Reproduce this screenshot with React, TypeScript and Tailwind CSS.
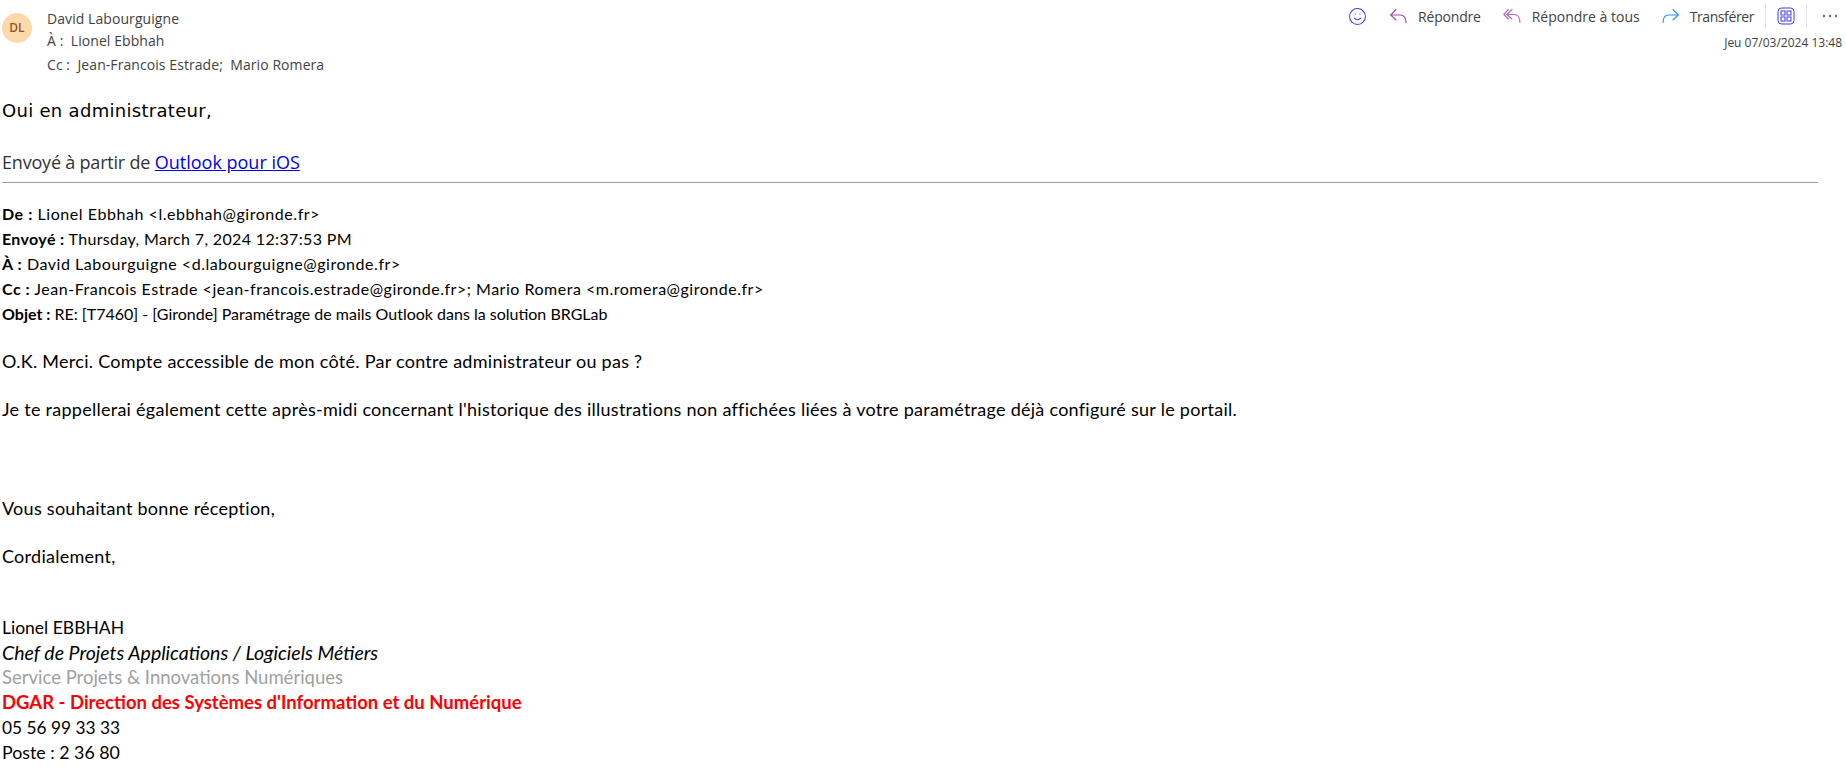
import { Smile } from 'lucide-react';

const segoe = 'font-["Open_Sans",sans-serif]';

const ReplyIcon = () => (
  <svg width="17" height="16" viewBox="0 0 17 16" fill="none" stroke="#a54ba5" strokeWidth="1.1" strokeLinecap="round" strokeLinejoin="round">
    <path d="M6 1.5 0.8 7 6 12" />
    <path d="M0.8 7H10.5C13.5 7 15.8 9.8 16 14.5" />
  </svg>
);

const ReplyAllIcon = () => (
  <svg width="18" height="16" viewBox="0 0 18 16" fill="none" stroke="#b565c0" strokeWidth="1.1" strokeLinecap="round" strokeLinejoin="round">
    <path d="M5.5 1.5 0.8 6.5 5.5 11" />
    <path d="M9 1.5 4 6.5 9 11" />
    <path d="M4 6.5H11C14.5 6.5 16.8 9.5 17 14.5" />
  </svg>
);

const ForwardIcon = () => (
  <svg width="17" height="16" viewBox="0 0 17 16" fill="none" stroke="#2b95e5" strokeWidth="1.1" strokeLinecap="round" strokeLinejoin="round">
    <path d="M11 1.5 16.2 7 11 12" />
    <path d="M16.2 7H6.5C3.5 7 1.2 9.8 1 14.5" />
  </svg>
);

const Action = ({ icon, label, tracking }: { icon: React.ReactNode; label: string; tracking: string }) => (
  <div className="flex items-center gap-[11px]">
    {icon}
    <span className={`text-[14px] text-[#424242] ${tracking}`}>{label}</span>
  </div>
);

const MetaLine = ({ label, value, tracking }: { label: string; value: string; tracking: string }) => (
  <div className={`h-[25px] leading-[25px] ${tracking}`}>
    <b className="font-bold">{label}</b> {value}
  </div>
);

export default function App() {
  return (
    <div className={`h-[767px] w-[1846px] overflow-hidden bg-white ${segoe}`}>
      <header className="flex h-[75px] justify-between">
        <div className="flex">
          <div className="ml-[2px] mt-[13px] flex h-[30px] w-[30px] items-center justify-center rounded-full bg-[#fed9a9] text-[12px] font-semibold text-[#8e562e]">
            DL
          </div>
          <div className="ml-[15px] pt-[8px] text-[14px] tracking-[0.07px] text-[#424242]">
            <div className="h-[21px] leading-[21px]">David Labourguigne</div>
            <div className="h-[23px] leading-[23px]">À :&nbsp; Lionel Ebbhah</div>
            <div className="h-[26px] leading-[26px]">Cc :&nbsp; Jean-Francois Estrade;&nbsp; Mario Romera</div>
          </div>
        </div>
        <div className="flex flex-col items-end pr-[4px]">
          <div className="flex h-[32px] items-center">
            <Smile size={19} strokeWidth={1.3} className="mr-[23px] text-[#3b3fe8]" />
            <div className="flex items-center gap-[22px]">
              <Action icon={<ReplyIcon />} label="Répondre" tracking="tracking-[-0.2px]" />
              <Action icon={<ReplyAllIcon />} label="Répondre à tous" tracking="tracking-normal" />
              <Action icon={<ForwardIcon />} label="Transférer" tracking="tracking-[-0.4px]" />
            </div>
            <div className="ml-[11px] h-[24px] w-px bg-[#e3e3e3]" />
            <svg className="mx-[11px]" width="18" height="18" viewBox="0 0 18 18" fill="none" stroke="#3b3fd8" strokeWidth="1">
              <rect x="1" y="1" width="16" height="16" rx="3.5" />
              <rect x="4" y="4" width="4" height="4" />
              <rect x="10" y="4" width="4" height="4" />
              <rect x="4" y="10" width="4" height="4" />
              <rect x="10" y="10" width="4" height="4" />
            </svg>
            <div className="h-[24px] w-px bg-[#e3e3e3]" />
            <svg className="ml-[15px] mr-[4px]" width="16" height="4" viewBox="0 0 16 4" fill="#666666">
              <circle cx="2" cy="2" r="1.2" />
              <circle cx="8" cy="2" r="1.2" />
              <circle cx="14" cy="2" r="1.2" />
            </svg>
          </div>
          <div className="mt-[2px] text-[12px] text-[#424242]">Jeu 07/03/2024 13:48</div>
        </div>
      </header>

      <main className="px-[2px]">
        <p className="mt-[24px] h-[24px] font-['DejaVu_Sans',sans-serif] text-[18px] leading-[24px] tracking-[0.3px] text-black">
          Oui en administrateur,
        </p>
        <p className="mt-[27px] h-[24px] text-[18px] leading-[24px] tracking-[-0.2px] text-[#333]">
          Envoyé à partir de{' '}
          <a href="#" className="tracking-normal text-[#0000ee] underline">
            Outlook pour iOS
          </a>
        </p>
        <hr className="mt-[8px] w-[1816px] border-t border-[#a0a0a0]" />

        <div className="mt-[18px] font-['Lato',sans-serif] text-[16px] text-black">
          <MetaLine label="De :" value="Lionel Ebbhah <l.ebbhah@gironde.fr>" tracking="tracking-[0.55px]" />
          <MetaLine label="Envoyé :" value="Thursday, March 7, 2024 12:37:53 PM" tracking="tracking-[0.35px]" />
          <MetaLine label="À :" value="David Labourguigne <d.labourguigne@gironde.fr>" tracking="tracking-[0.55px]" />
          <MetaLine label="Cc :" value="Jean-Francois Estrade <jean-francois.estrade@gironde.fr>; Mario Romera <m.romera@gironde.fr>" tracking="tracking-[0.51px]" />
          <MetaLine label="Objet :" value="RE: [T7460] - [Gironde] Paramétrage de mails Outlook dans la solution BRGLab" tracking="tracking-normal" />
        </div>

        <div className="font-['Lato',sans-serif] text-[18px] tracking-[0.27px] text-black">
          <p className="mt-[23px] h-[24px] leading-[24px]">O.K. Merci. Compte accessible de mon côté. Par contre administrateur ou pas ?</p>
          <p className="mt-[24px] h-[24px] leading-[24px]">
            Je te rappellerai également cette après-midi concernant l'historique des illustrations non affichées liées à votre paramétrage déjà configuré sur le portail.
          </p>
          <p className="mt-[75px] h-[24px] leading-[24px]">Vous souhaitant bonne réception,</p>
          <p className="mt-[24px] h-[24px] leading-[24px]">Cordialement,</p>
          <div className="mt-[47px] leading-[25px] tracking-normal">
            <div className="text-[17.5px]">Lionel EBBHAH</div>
            <div className="text-[19.5px] italic">Chef de Projets Applications / Logiciels Métiers</div>
            <div className="text-[18.5px] text-[#a0a0a0]">Service Projets &amp; Innovations Numériques</div>
            <div className="text-[18.5px] font-bold text-[#ff0000]">DGAR - Direction des Systèmes d'Information et du Numérique</div>
            <div className="text-[17.3px]">05 56 99 33 33</div>
            <div className="text-[17.8px]">Poste : 2 36 80</div>
          </div>
        </div>
      </main>
    </div>
  );
}
